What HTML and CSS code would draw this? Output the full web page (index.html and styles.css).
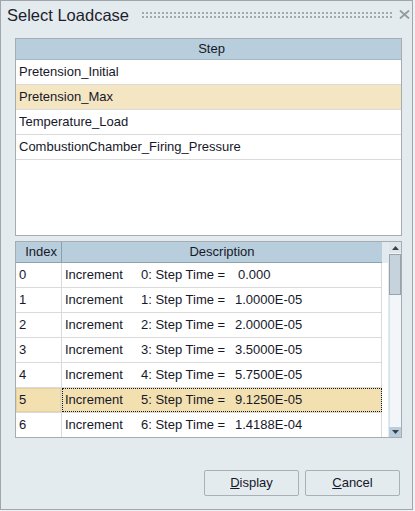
FILE: index.html
```html
<!DOCTYPE html>
<html>
<head>
<meta charset="utf-8">
<link rel="stylesheet" href="styles.css">
</head>
<body>
<div class="win">
  <div class="titlebar">
    <span class="title">Select Loadcase</span>
    <svg class="grip" width="250" height="6" viewBox="0 0 250 6">
      <defs>
        <pattern id="dots" width="4" height="4" patternUnits="userSpaceOnUse">
          <rect x="0" y="0" width="2" height="2" fill="#a2aab0"/>
        </pattern>
      </defs>
      <rect x="0" y="0" width="250" height="6" fill="url(#dots)"/>
    </svg>
    <svg class="close" width="11" height="9" viewBox="0 0 11 9">
      <path d="M1 0.5 L10 8.5 M10 0.5 L1 8.5" stroke="#939ba1" stroke-width="1.8" fill="none"/>
    </svg>
  </div>

  <div class="box steps">
    <div class="hdr">Step</div>
    <div class="row">Pretension_Initial</div>
    <div class="row sel">Pretension_Max</div>
    <div class="row">Temperature_Load</div>
    <div class="row">CombustionChamber_Firing_Pressure</div>
  </div>

  <div class="box incs">
    <div class="grid">
      <div class="ghdr">
        <div class="hidx">Index</div>
        <div class="hdesc">Description</div>
      </div>
      <div class="grow"><div class="cidx">0</div><div class="cdesc"><span class="inc">Increment</span><span class="lbl">0: Step Time =</span><span class="val pad">0.000</span></div></div>
      <div class="grow"><div class="cidx">1</div><div class="cdesc"><span class="inc">Increment</span><span class="lbl">1: Step Time =</span><span class="val">1.0000E-05</span></div></div>
      <div class="grow"><div class="cidx">2</div><div class="cdesc"><span class="inc">Increment</span><span class="lbl">2: Step Time =</span><span class="val">2.0000E-05</span></div></div>
      <div class="grow"><div class="cidx">3</div><div class="cdesc"><span class="inc">Increment</span><span class="lbl">3: Step Time =</span><span class="val">3.5000E-05</span></div></div>
      <div class="grow"><div class="cidx">4</div><div class="cdesc"><span class="inc">Increment</span><span class="lbl">4: Step Time =</span><span class="val">5.7500E-05</span></div></div>
      <div class="grow gsel"><div class="cidx">5</div><div class="cdesc"><span class="inc">Increment</span><span class="lbl">5: Step Time =</span><span class="val">9.1250E-05</span></div></div>
      <div class="grow last"><div class="cidx">6</div><div class="cdesc"><span class="inc">Increment</span><span class="lbl">6: Step Time =</span><span class="val">1.4188E-04</span></div></div>
    </div>
    <div class="spacer"><div class="spacer-hdr"></div></div>
    <div class="vscroll">
      <div class="sb-up">
        <svg width="7" height="4" viewBox="0 0 7 4"><path d="M0 4 L3.5 0 L7 4 Z" fill="#3a4046"/></svg>
      </div>
      <div class="sb-thumb"></div>
      <div class="sb-track"></div>
      <div class="sb-down">
        <svg width="7" height="4" viewBox="0 0 7 4"><path d="M0 0 L3.5 4 L7 0 Z" fill="#3a4046"/></svg>
      </div>
    </div>
  </div>

  <div class="buttons">
    <button class="btn"><u>D</u>isplay</button>
    <button class="btn"><u>C</u>ancel</button>
  </div>
</div>
</body>
</html>
```

FILE: styles.css
```css
html, body {
  margin: 0;
  padding: 0;
  background: #eef2f4;
}

.win {
  width: 413px;
  height: 510px;
  box-sizing: border-box;
  border: 1px solid #9fa7ad;
  background: #e4ebef;
  font-family: "Liberation Sans", Arial, sans-serif;
  font-size: 13px;
  color: #16182a;
}

.titlebar {
  height: 37px;
  box-sizing: border-box;
  display: flex;
  align-items: flex-start;
  padding: 5px 2px 0 6px;
}

.title {
  font-size: 16.5px;
  line-height: 19px;
  color: #1c1e2c;
  flex: 1;
}

.grip {
  margin-top: 6px;
  margin-right: 7px;
  flex: none;
}

.close {
  margin-top: 4px;
  flex: none;
}

.box {
  margin-left: 14px;
  width: 387px;
  box-sizing: border-box;
  border: 1px solid #a6acb1;
  background: #ffffff;
}

.steps {
  height: 198px;
}

.hdr {
  height: 20px;
  line-height: 20px;
  background: #b8cedc;
  border-bottom: 1px solid #a4b7c3;
  text-align: center;
  padding-left: 6px;
}

.row {
  height: 24px;
  line-height: 24px;
  border-bottom: 1px solid #dadada;
  padding-left: 3px;
  white-space: nowrap;
}

.row.sel {
  background: #f5e6c3;
}

.incs {
  margin-top: 5px;
  height: 197px;
  display: flex;
}

.grid {
  width: 366px;
  flex: none;
}

.ghdr {
  display: flex;
  height: 20px;
  line-height: 20px;
  background: #b8cedc;
  border-bottom: 1px solid #8fa2ae;
}

.hidx {
  width: 46px;
  box-sizing: border-box;
  border-right: 1px solid #8c9eaa;
  text-align: right;
  padding-right: 4px;
}

.hdesc {
  width: 320px;
  text-align: center;
}

.grow {
  display: flex;
  height: 24px;
  line-height: 24px;
  border-bottom: 1px solid #dadada;
  white-space: nowrap;
}

.grow.last {
  border-bottom: none;
}

.cidx {
  width: 46px;
  box-sizing: border-box;
  border-right: 1px solid #dadada;
  padding-left: 3px;
}

.cdesc {
  width: 320px;
  box-sizing: border-box;
  border-right: 1px solid #dadada;
  padding-left: 3px;
  display: flex;
}

.inc {
  width: 76px;
  flex: none;
}

.lbl {
  width: 94px;
  flex: none;
}

.val.pad {
  padding-left: 3px;
}

.gsel .cidx {
  background: #f3e0b0;
  box-shadow: inset 0 0 0 1px #e6d29e;
}

.gsel .cdesc {
  background: #f3e0b0;
  outline: 1px dotted #1a1a1a;
  outline-offset: -1px;
}

.spacer {
  width: 7px;
  flex: none;
  background: #ffffff;
  border-right: 1px solid #e2ebf1;
  box-sizing: border-box;
}

.spacer-hdr {
  height: 21px;
  background: #e3eaef;
}

.vscroll {
  width: 12px;
  flex: none;
  display: flex;
  flex-direction: column;
  background: #f3f6f8;
}

.sb-up {
  height: 11px;
  flex: none;
  background: #dde6ec;
  display: flex;
  align-items: center;
  justify-content: center;
}

.sb-thumb {
  height: 41px;
  flex: none;
  margin-top: 1px;
  box-sizing: border-box;
  background: #c6d3dc;
  border: 1px solid #98a3ab;
}

.sb-track {
  flex: 1;
  border-left: 1px solid #d6e2ea;
}

.sb-down {
  height: 10px;
  flex: none;
  background: #b8cedc;
  display: flex;
  align-items: center;
  justify-content: center;
}

.buttons {
  display: flex;
  justify-content: flex-end;
  gap: 6px;
  margin-top: 32px;
  padding-right: 12px;
}

.btn {
  width: 95px;
  height: 26px;
  box-sizing: border-box;
  border: 1px solid #aab0b5;
  border-radius: 2px;
  background: #e4ebef;
  font-family: "Liberation Sans", Arial, sans-serif;
  font-size: 13px;
  color: #16182a;
  padding: 0;
  line-height: 24px;
}

.btn u {
  text-decoration: underline;
}
```
